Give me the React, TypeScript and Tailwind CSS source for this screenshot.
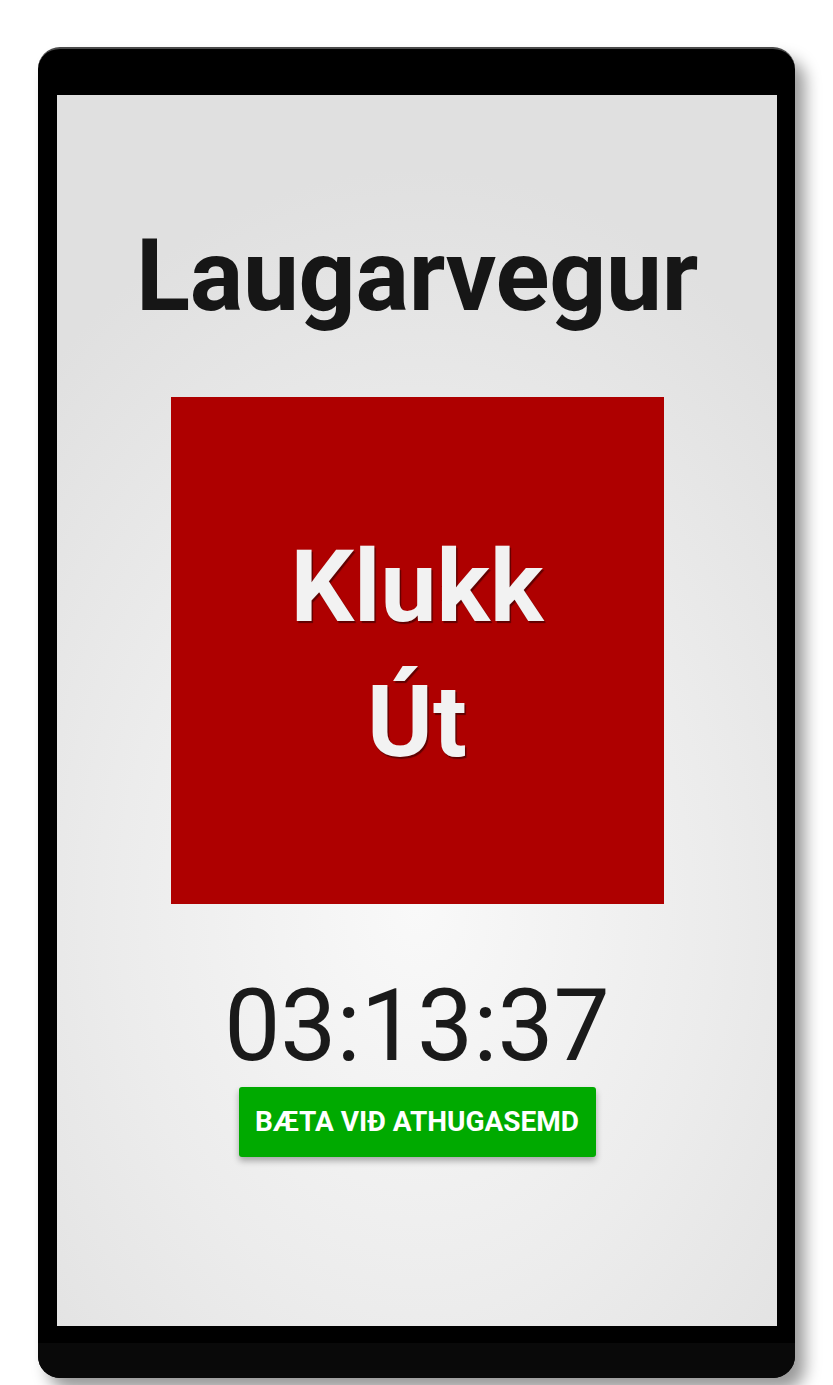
export default function App() {
  return (
    <div className="w-[833px] h-[1385px] bg-white pt-[47px] pl-[38px] font-['Roboto',sans-serif]">
      <div className="w-[757px] h-[1331px] rounded-[22px] bg-black border-t-2 border-[#4a4a4a] shadow-[10px_12px_16px_rgba(0,0,0,0.4)] pt-[46px] flex flex-col">
        <div className="ml-[19px] w-[720px] h-[1231px] bg-[radial-gradient(ellipse_75%_60%_at_50%_66%,#f9f9f9_0%,#ececec_55%,#e0e0e0_100%)] flex flex-col items-center pt-[131px]">
          <h1 className="text-[100px] leading-none font-bold text-[#161616] tracking-[-0.3px]">Laugarvegur</h1>
          <div className="mt-[71px] w-[493px] h-[507px] bg-[#ae0000] flex items-center justify-center pt-[7px]">
            <div className="text-center text-[100px] leading-[135px] font-bold text-[#f2f2f2] [text-shadow:1.5px_1.5px_1px_rgba(0,0,0,0.45)]">
              Klukk
              <br />
              Út
            </div>
          </div>
          <div className="mt-[72px] text-[100px] leading-none text-[#1a1a1a]">03:13:37</div>
          <button className="mt-[11px] w-[357px] h-[70px] bg-[#00aa00] rounded-[3px] text-white font-bold text-[28px] shadow-[0_4px_6px_rgba(0,0,0,0.3)]">
            BÆTA VIÐ ATHUGASEMD
          </button>
        </div>
        <div className="flex-1 mt-[17px] rounded-b-[22px] bg-[#090909]" />
      </div>
    </div>
  )
}
